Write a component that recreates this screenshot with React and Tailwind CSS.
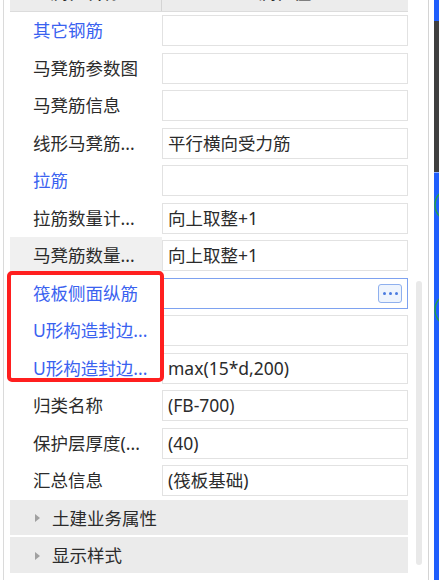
const rows = [
  { label: '其它钢筋', blue: true, value: '' },
  { label: '马凳筋参数图', value: '' },
  { label: '马凳筋信息', value: '' },
  { label: '线形马凳筋...', value: '平行横向受力筋' },
  { label: '拉筋', blue: true, value: '' },
  { label: '拉筋数量计...', value: '向上取整+1' },
  { label: '马凳筋数量...', value: '向上取整+1', hover: true },
  { label: '筏板侧面纵筋', blue: true, value: '', focused: true },
  { label: 'U形构造封边...', blue: true, value: '' },
  { label: 'U形构造封边...', blue: true, value: 'max(15*d,200)' },
  { label: '归类名称', value: '(FB-700)' },
  { label: '保护层厚度(...', value: '(40)' },
  { label: '汇总信息', value: '(筏板基础)' },
]

const groups = ['土建业务属性', '显示样式']

function PropRow({ row }) {
  return (
    <div className="flex h-[37.5px] shrink-0 items-center">
      <div
        className={`flex h-full w-[152px] items-center pl-[23px] ${
          row.hover ? 'bg-[#f0f0f0]' : ''
        } ${row.blue ? 'text-[#3a62f0]' : 'text-[#2b2b2b]'}`}
      >
        <span className="whitespace-nowrap">{row.label}</span>
      </div>
      <div
        className={`flex h-[31px] w-[246px] items-center border bg-white pl-[5px] pr-[5px] text-[#2b2b2b] ${
          row.focused ? 'border-[#7ea2f0]' : 'border-[#e2e2e2]'
        }`}
      >
        <span className="flex-1 whitespace-nowrap">{row.value}</span>
        {row.focused && (
          <div className="flex h-[19px] w-[24px] items-center justify-center gap-[3px] rounded-[3px] border border-[#8fb0ee] bg-[#eef4fd]">
            <span className="h-[3px] w-[3px] rounded-full bg-[#4a7be0]" />
            <span className="h-[3px] w-[3px] rounded-full bg-[#4a7be0]" />
            <span className="h-[3px] w-[3px] rounded-full bg-[#4a7be0]" />
          </div>
        )}
      </div>
    </div>
  )
}

function GroupRow({ title }) {
  return (
    <div className="h-[37.5px] shrink-0">
      <div className="flex h-[35.5px] items-center bg-[#ebebeb] pt-[2px] text-[#2b2b2b]">
        <svg className="ml-[25px] h-[8px] w-[5px]" viewBox="0 0 5 8">
          <path d="M0 0 L5 4 L0 8 Z" fill="#a0a0a0" />
        </svg>
        <span className="ml-[12px] whitespace-nowrap">{title}</span>
      </div>
    </div>
  )
}

export default function App() {
  return (
    <div className="relative flex h-[580px] w-[439px] overflow-hidden bg-white font-['Noto_Sans','Noto_Sans_CJK_SC',sans-serif] text-[17.5px] leading-none">
      {/* left edge */}
      <div className="flex w-[10px] shrink-0">
        <div className="ml-[3px] w-px bg-[#dadada]" />
      </div>

      {/* property grid */}
      <div className="flex w-[398px] shrink-0 flex-col">
        <div className="-mt-[17px] flex h-[29px] shrink-0 border-b border-[#dcdcdc] bg-[#ececec] font-medium text-[#2b2b2b]">
          <div className="flex w-[152px] items-center justify-center border-r border-[#d4d4d4] pb-[8px]">属性名称</div>
          <div className="flex flex-1 items-center justify-center pb-[8px]">属性值</div>
        </div>
        {rows.map((row, i) => (
          <PropRow key={i} row={row} />
        ))}
        {groups.map((g) => (
          <GroupRow key={g} title={g} />
        ))}
      </div>

      {/* scrollbar */}
      <div className="ml-[8px] w-[6px] shrink-0 pt-[281px]">
        <div className="h-[284px] rounded-full bg-[#e9e9e9]" />
      </div>

      <div className="ml-[6px] w-px shrink-0 bg-[#d4d4d4]" />

      {/* neighbouring window edge */}
      <div className="ml-[5px] flex-1 bg-[#1f5efc]">
        <svg className="h-[580px] w-[5px]" viewBox="0 0 5 580">
          <rect x="0" y="21" width="5" height="151" fill="#3f3f3f" />
          <rect x="0" y="172" width="5" height="1" fill="#8fb0ff" />
          <circle cx="17" cy="205" r="16" fill="none" stroke="#23a04a" strokeWidth="1.5" />
          <circle cx="17" cy="310" r="16" fill="none" stroke="#23a04a" strokeWidth="1.5" />
        </svg>
      </div>

      {/* red annotation box */}
      <div className="pointer-events-none absolute left-[7px] top-[271px] h-[111px] w-[157px] rounded-[5px] border-4 border-[#ff1f1f]" />
    </div>
  )
}
